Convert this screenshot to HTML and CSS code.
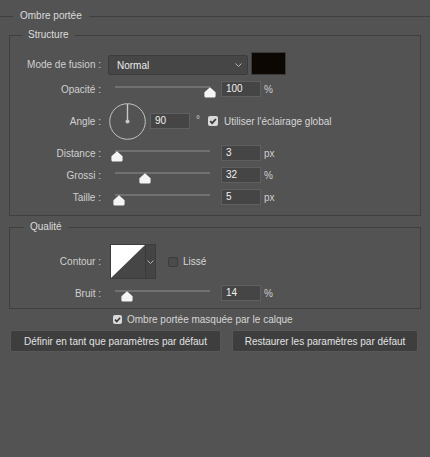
FILE: index.html
```html
<!DOCTYPE html>
<html lang="fr">
<head>
<meta charset="utf-8">
<title>Ombre portée</title>
<link rel="stylesheet" href="styles.css">
</head>
<body>
<div class="panel">
  <div class="group-head">
    <span class="rule rule-start"></span>
    <span class="group-title">Ombre portée</span>
    <span class="rule rule-fill"></span>
  </div>

  <fieldset class="box box-structure">
    <legend>Structure</legend>

    <div class="row row-mode">
      <span class="lbl lbl-mode">Mode de fusion :</span>
      <div class="select">
        <span class="select-value">Normal</span>
        <svg class="chev" width="7" height="4" viewBox="0 0 7 4"><path d="M0.5 0.5 L3.5 3.5 L6.5 0.5" fill="none" stroke="#b8b8b8" stroke-width="1"/></svg>
      </div>
      <div class="swatch"></div>
    </div>

    <div class="row">
      <span class="lbl">Opacité :</span>
      <div class="slider">
        <div class="track"></div>
        <svg class="thumb" style="left:100%" width="12" height="11" viewBox="0 0 12 11"><path d="M6 0.3 L11.6 5.2 V9 Q11.6 10.6 10 10.6 H2 Q0.4 10.6 0.4 9 V5.2 Z" fill="#f4f4f4"/></svg>
      </div>
      <div class="num">100</div><span class="unit">%</span>
    </div>

    <div class="row row-angle">
      <span class="lbl">Angle :</span>
      <svg class="dial" width="37" height="37" viewBox="0 0 37 37">
        <circle cx="18.5" cy="18.5" r="17.8" fill="none" stroke="#c2c2c2" stroke-width="1"/>
        <line x1="18.5" y1="1" x2="18.5" y2="18" stroke="#c8c8c8" stroke-width="1.4"/>
        <circle cx="18.5" cy="18.5" r="2" fill="#c8c8c8"/>
      </svg>
      <div class="num num-angle">90</div><span class="deg">°</span>
      <span class="check check-on"><svg width="10" height="10" viewBox="0 0 10 10"><path d="M2.2 5.1 L4.2 7.2 L7.9 3" fill="none" stroke="#3a3a3a" stroke-width="1.8"/></svg></span>
      <span class="check-text">Utiliser l'éclairage global</span>
    </div>

    <div class="row">
      <span class="lbl">Distance :</span>
      <div class="slider">
        <div class="track"></div>
        <svg class="thumb" style="left:2%" width="12" height="11" viewBox="0 0 12 11"><path d="M6 0.3 L11.6 5.2 V9 Q11.6 10.6 10 10.6 H2 Q0.4 10.6 0.4 9 V5.2 Z" fill="#f4f4f4"/></svg>
      </div>
      <div class="num">3</div><span class="unit">px</span>
    </div>

    <div class="row">
      <span class="lbl">Grossi :</span>
      <div class="slider">
        <div class="track"></div>
        <svg class="thumb" style="left:32%" width="12" height="11" viewBox="0 0 12 11"><path d="M6 0.3 L11.6 5.2 V9 Q11.6 10.6 10 10.6 H2 Q0.4 10.6 0.4 9 V5.2 Z" fill="#f4f4f4"/></svg>
      </div>
      <div class="num">32</div><span class="unit">%</span>
    </div>

    <div class="row">
      <span class="lbl">Taille :</span>
      <div class="slider">
        <div class="track"></div>
        <svg class="thumb" style="left:4%" width="12" height="11" viewBox="0 0 12 11"><path d="M6 0.3 L11.6 5.2 V9 Q11.6 10.6 10 10.6 H2 Q0.4 10.6 0.4 9 V5.2 Z" fill="#f4f4f4"/></svg>
      </div>
      <div class="num">5</div><span class="unit">px</span>
    </div>
  </fieldset>

  <fieldset class="box box-quality">
    <legend>Qualité</legend>

    <div class="row row-contour">
      <span class="lbl">Contour :</span>
      <div class="contour">
        <svg class="curve" width="34" height="33" viewBox="0 0 34 33" preserveAspectRatio="none">
          <rect x="0" y="0" width="34" height="33" fill="#464646"/>
          <polygon points="0,0 34,0 0,33" fill="#ffffff"/>
        </svg>
        <div class="contour-drop">
          <svg width="7" height="4" viewBox="0 0 7 4"><path d="M0.5 0.5 L3.5 3.5 L6.5 0.5" fill="none" stroke="#b0b0b0" stroke-width="1"/></svg>
        </div>
      </div>
      <span class="check check-off"></span>
      <span class="check-text check-text-lisse">Lissé</span>
    </div>

    <div class="row">
      <span class="lbl">Bruit :</span>
      <div class="slider">
        <div class="track"></div>
        <svg class="thumb" style="left:13%" width="12" height="11" viewBox="0 0 12 11"><path d="M6 0.3 L11.6 5.2 V9 Q11.6 10.6 10 10.6 H2 Q0.4 10.6 0.4 9 V5.2 Z" fill="#f4f4f4"/></svg>
      </div>
      <div class="num">14</div><span class="unit">%</span>
    </div>
  </fieldset>

  <div class="row row-mask">
    <span class="check check-on"><svg width="10" height="10" viewBox="0 0 10 10"><path d="M2.2 5.1 L4.2 7.2 L7.9 3" fill="none" stroke="#3a3a3a" stroke-width="1.8"/></svg></span>
    <span class="check-text">Ombre portée masquée par le calque</span>
  </div>

  <div class="buttons">
    <button class="btn btn-define" type="button">Définir en tant que paramètres par défaut</button>
    <button class="btn btn-restore" type="button">Restaurer les paramètres par défaut</button>
  </div>
</div>
</body>
</html>
```

FILE: styles.css
```css
* {
  box-sizing: border-box;
}

html,
body {
  margin: 0;
  padding: 0;
}

body {
  width: 430px;
  height: 457px;
  overflow: hidden;
  background: #535353;
  font-family: "Liberation Sans", Arial, sans-serif;
  font-size: 10px;
  color: #d2d2d2;
}

.panel {
  padding-top: 10px;
}

.group-head {
  display: flex;
  align-items: center;
  height: 12px;
  line-height: 12px;
}

.rule {
  height: 1px;
  background: #3f3f3f;
}

.rule-start {
  width: 13px;
}

.rule-fill {
  flex: 1;
}

.group-title {
  padding: 0 7px;
  color: #dcdcdc;
}

.box {
  margin: 7px 9px 0 9px;
  padding: 0 0 10px 0;
  border: 1px solid #3f3f3f;
  min-width: 0;
}

.box legend {
  padding: 0 6px;
  margin-left: 12px;
  line-height: 12px;
  height: 12px;
  color: #dcdcdc;
}

.box-quality {
  margin-top: 5px;
  padding-bottom: 7px;
}

.box-quality legend {
  margin-left: 14px;
}

.row {
  display: flex;
  align-items: center;
  height: 16px;
  margin-top: 6px;
}

.lbl {
  flex: none;
  width: 91px;
  text-align: right;
  white-space: nowrap;
  color: #d0d0d0;
}

/* Mode de fusion */
.row-mode {
  height: 23px;
  margin-top: 11px;
  align-items: flex-end;
}

.lbl-mode {
  line-height: 20px;
}

.select {
  flex: none;
  display: flex;
  align-items: center;
  justify-content: space-between;
  width: 140px;
  height: 20px;
  margin-left: 7px;
  padding: 0 5px 0 8px;
  background: #464646;
  border: 1px solid #3c3c3c;
  border-radius: 2px;
}

.select-value {
  color: #ececec;
}

.swatch {
  flex: none;
  width: 35px;
  height: 23px;
  margin-left: 3px;
  background: #0d0704;
  border: 1px solid #3a3a3a;
}

/* sliders */
.slider {
  flex: none;
  position: relative;
  width: 95px;
  height: 16px;
  margin-left: 14px;
}

.track {
  height: 2px;
  margin-top: 5px;
  background: #707070;
}

.thumb {
  position: absolute;
  top: 6px;
  transform: translateX(-50%);
}

.num {
  flex: none;
  width: 40px;
  height: 16px;
  margin-left: 11px;
  padding-left: 4px;
  line-height: 14px;
  background: #454545;
  border: 1px solid #5f5f5f;
  color: #f0f0f0;
}

.unit {
  margin-left: 3px;
  color: #cfcfcf;
}

/* Angle */
.row-angle {
  height: 36px;
}

.dial {
  flex: none;
  margin-left: 8px;
}

.num-angle {
  margin-left: 4px;
}

.deg {
  margin-left: 6px;
  margin-top: -4px;
  color: #cfcfcf;
}

.check {
  flex: none;
  display: inline-flex;
  width: 10px;
  height: 10px;
  border-radius: 2px;
}

.check-on {
  background: #d9d9d9;
}

.check-off {
  border: 1px solid #3c3c3c;
  background: #4b4b4b;
}

.row-angle .check {
  margin-left: 8px;
}

.check-text {
  margin-left: 6px;
  white-space: nowrap;
  color: #d6d6d6;
}

/* Contour */
.row-contour {
  height: 35px;
  margin-top: 11px;
}

.contour {
  flex: none;
  display: flex;
  width: 46px;
  height: 35px;
  margin-left: 9px;
  border: 1px solid #3c3c3c;
  background: #454545;
}

.curve {
  display: block;
  flex: none;
}

.contour-drop {
  flex: 1;
  display: flex;
  align-items: center;
  justify-content: center;
  border-left: 1px solid #3a3a3a;
  background: #444444;
}

.row-contour .check {
  margin-left: 12px;
}

.check-text-lisse {
  margin-left: 5px;
}

/* masked checkbox */
.row-mask {
  margin-top: 2px;
  padding-left: 113px;
}

.row-mask .check {
  width: 9px;
  height: 9px;
}

.row-mask .check svg {
  width: 9px;
  height: 9px;
}

.row-mask .check-text {
  margin-left: 5px;
}

/* buttons */
.buttons {
  display: flex;
  gap: 11px;
  margin: 3px 0 0 10px;
}

.btn {
  height: 22px;
  padding: 0;
  font-family: inherit;
  font-size: 10px;
  color: #e2e2e2;
  background: #3e3e3e;
  border: 1px solid #585858;
  border-radius: 2px;
  white-space: nowrap;
}

.btn-define {
  width: 211px;
}

.btn-restore {
  width: 186px;
}
```
